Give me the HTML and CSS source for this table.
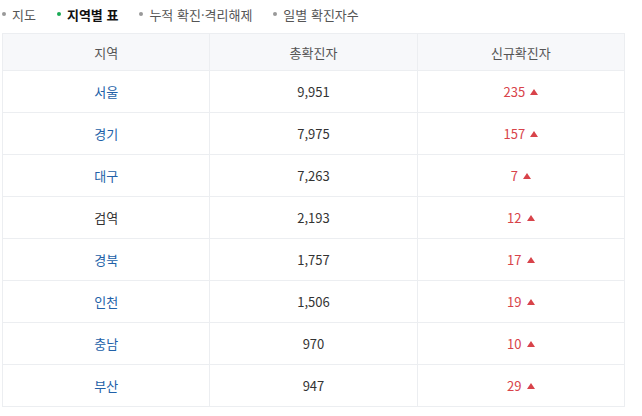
FILE: index.html
```html
<!DOCTYPE html>
<html lang="ko">
<head>
<meta charset="utf-8">
<link rel="stylesheet" href="styles.css">
</head>
<body>
<ul class="tabs">
  <li class="tab">지도</li>
  <li class="tab active">지역별 표</li>
  <li class="tab">누적 확진·격리해제</li>
  <li class="tab">일별 확진자수</li>
</ul>
<table class="grid">
  <thead>
    <tr><th>지역</th><th>총확진자</th><th>신규확진자</th></tr>
  </thead>
  <tbody>
    <tr><td class="area">서울</td><td>9,951</td><td class="new">235<span class="up"></span></td></tr>
    <tr><td class="area">경기</td><td>7,975</td><td class="new">157<span class="up"></span></td></tr>
    <tr><td class="area">대구</td><td>7,263</td><td class="new">7<span class="up"></span></td></tr>
    <tr><td class="area plain">검역</td><td>2,193</td><td class="new">12<span class="up"></span></td></tr>
    <tr><td class="area">경북</td><td>1,757</td><td class="new">17<span class="up"></span></td></tr>
    <tr><td class="area">인천</td><td>1,506</td><td class="new">19<span class="up"></span></td></tr>
    <tr><td class="area">충남</td><td>970</td><td class="new">10<span class="up"></span></td></tr>
    <tr><td class="area">부산</td><td>947</td><td class="new">29<span class="up"></span></td></tr>
  </tbody>
</table>
</body>
</html>
```

FILE: styles.css
```css
html, body {
  margin: 0;
  padding: 0;
  background: #fff;
  font-family: "Noto Sans CJK KR", "Noto Sans", sans-serif;
}
body {
  padding: 2px 0 0 2px;
  width: 623px;
}
.tabs {
  list-style: none;
  margin: 0;
  padding: 0;
  display: flex;
  height: 24px;
  align-items: center;
  font-size: 13px;
  color: #555;
}
.tab {
  display: flex;
  align-items: center;
  margin-right: 21px;
}
.tab::before {
  content: "";
  width: 4px;
  height: 4px;
  border-radius: 50%;
  background: #999;
  margin-right: 6px;
}
.tab.active {
  color: #111;
  font-weight: 700;
}
.tab.active::before {
  background: #1aaa55;
}
.grid {
  margin-top: 7px;
  width: 623px;
  border-collapse: collapse;
  table-layout: fixed;
  font-size: 13px;
  border: 1px solid #eceef1;
}
.grid th, .grid td {
  border: 1px solid #eceef1;
  text-align: center;
  padding: 0;
}
.grid th {
  height: 36px;
  background: #f7f8fa;
  font-weight: 400;
  color: #555;
}
.grid td {
  height: 41px;
  color: #333;
}
.grid td.area {
  color: #2261a8;
}
.grid td.area.plain {
  color: #333;
}
.grid td.new {
  color: #d8434a;
}
.up {
  display: inline-block;
  width: 0;
  height: 0;
  border-left: 4px solid transparent;
  border-right: 4px solid transparent;
  border-bottom: 6px solid #d8434a;
  margin-left: 5px;
  vertical-align: 2px;
}
```
